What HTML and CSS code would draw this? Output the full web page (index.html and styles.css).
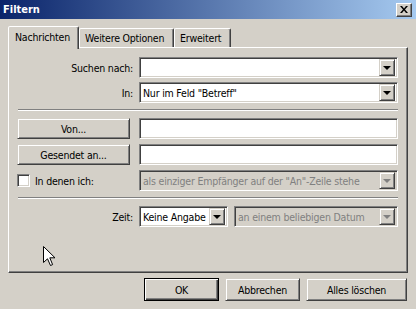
FILE: index.html
```html
<!DOCTYPE html>
<html lang="de">
<head>
  <meta charset="UTF-8" />
  <title>Filtern</title>
  <link rel="stylesheet" href="styles.css">
</head>
<body>
  <div class="window">
    <div class="titlebar">
      <span class="title">Filtern</span>
      <span class="close-btn">
        <svg width="8" height="7" viewBox="0 0 8 7"><path d="M0 0h2l2 2.5L6 0h2L5 3.5 8 7H6L4 4.5 2 7H0l3-3.5z" fill="#000"/></svg>
      </span>
    </div>

    <div class="client">
      <div class="tabs">
        <div class="tab active">Nachrichten</div>
        <div class="tab">Weitere Optionen</div>
        <div class="tab">Erweitert</div>
      </div>

      <div class="panel">
        <div class="row">
          <span class="lbl">Suchen nach:</span>
          <div class="combo"><span class="combo-text"></span><span class="drop"><i class="arrow"></i></span></div>
        </div>
        <div class="row gap4">
          <span class="lbl">In:</span>
          <div class="combo"><span class="combo-text">Nur im Feld "Betreff"</span><span class="drop"><i class="arrow"></i></span></div>
        </div>

        <div class="sep"></div>

        <div class="row">
          <span class="btn small">Von...</span>
          <div class="field"></div>
        </div>
        <div class="row gap5">
          <span class="btn small">Gesendet an...</span>
          <div class="field"></div>
        </div>
        <div class="row gap5">
          <span class="check-wrap"><span class="checkbox"></span>In denen ich:</span>
          <div class="combo disabled"><span class="combo-text">als einziger Empfänger auf der "An"-Zeile stehe</span><span class="drop"><i class="arrow"></i></span></div>
        </div>

        <div class="sep"></div>

        <div class="row zeit">
          <span class="lbl">Zeit:</span>
          <div class="pair">
            <div class="combo short"><span class="combo-text">Keine Angabe</span><span class="drop"><i class="arrow"></i></span></div>
            <div class="combo disabled"><span class="combo-text">an einem beliebigen Datum</span><span class="drop"><i class="arrow"></i></span></div>
          </div>
        </div>
      </div>

      <div class="actions">
        <span class="btn default">OK</span>
        <span class="btn">Abbrechen</span>
        <span class="btn wide">Alles löschen</span>
      </div>
    </div>

    <svg class="cursor" width="13" height="21" viewBox="0 0 13 21">
      <path d="M0.5 0.5 L0.5 16.5 L4.5 12.8 L7.5 19.5 L9.6 18.6 L6.8 11.8 L12 11.8 Z" fill="#fff" stroke="#000" stroke-width="1"/>
    </svg>
  </div>
</body>
</html>
```

FILE: styles.css
```css
:root {
  --face: #d4d0c8;
  --light: #ffffff;
  --shadow: #808080;
  --dark: #404040;
  --grey-text: #808080;
}

* {
  box-sizing: border-box;
  margin: 0;
  padding: 0;
}

body {
  width: 416px;
  height: 309px;
  overflow: hidden;
  font-family: "DejaVu Sans Condensed", "DejaVu Sans", sans-serif;
  font-size: 10.5px;
  letter-spacing: -0.2px;
  color: #000;
  background: var(--face);
}

.window {
  position: relative;
  width: 416px;
  height: 309px;
  background: var(--face);
}

/* title bar */
.titlebar {
  height: 19px;
  display: flex;
  align-items: center;
  justify-content: space-between;
  padding: 0 4px 0 3px;
  background: linear-gradient(to right, #0a246a 0%, #a6caf0 100%);
}

.title {
  color: #fff;
  font-weight: bold;
  font-size: 11px;
  letter-spacing: 0;
}

.close-btn {
  width: 16px;
  height: 14px;
  display: flex;
  align-items: center;
  justify-content: center;
  background: var(--face);
  border: 1px solid;
  border-color: var(--light) var(--dark) var(--dark) var(--light);
  box-shadow: inset -1px -1px var(--shadow);
}

/* client area */
.client {
  padding: 7px 9px 0 8px;
}

.tabs {
  display: flex;
  align-items: flex-end;
  height: 21px;
}

.tab {
  height: 19px;
  padding: 0 5px;
  display: flex;
  align-items: center;
  white-space: nowrap;
  border: 1px solid;
  border-bottom: none;
  border-color: var(--light) var(--dark) transparent var(--light);
  box-shadow: inset -1px 0 var(--shadow);
  border-radius: 2px 2px 0 0;
}

.tab:nth-child(2) { width: 95px; }
.tab:nth-child(3) { width: 57px; }

.tab.active {
  position: relative;
  z-index: 1;
  width: 71px;
  height: 23px;
  margin-bottom: -2px;
  padding: 0 0 3px 6px;
  background: var(--face);
}

.panel {
  width: 400px;
  height: 226px;
  padding: 9px 9px 0 8px;
  border: 1px solid;
  border-color: var(--light) var(--dark) var(--dark) var(--light);
  box-shadow: inset -1px -1px var(--shadow);
}

.row {
  display: grid;
  grid-template-columns: 122px 259px;
  align-items: center;
  height: 21px;
}

.row.gap4 { margin-top: 4px; }
.row.gap5 { margin-top: 5px; }
.row.zeit { margin-top: 3px; }

.lbl {
  text-align: right;
  padding-right: 6px;
}

.sep {
  height: 2px;
  margin: 6px 0 7px 1px;
  border-top: 1px solid var(--shadow);
  border-bottom: 1px solid var(--light);
}

/* sunken controls */
.field,
.combo,
.checkbox {
  background: #fff;
  border: 1px solid;
  border-color: var(--shadow) var(--light) var(--light) var(--shadow);
  box-shadow: inset 1px 1px var(--dark), inset -1px -1px var(--face);
}

.field {
  height: 21px;
}

.combo {
  height: 21px;
  display: flex;
  align-items: center;
  padding: 2px;
}

.combo-text {
  flex: 1;
  padding-left: 1px;
  white-space: nowrap;
  overflow: hidden;
}

.drop {
  flex: none;
  width: 16px;
  height: 17px;
  display: flex;
  align-items: center;
  justify-content: center;
  background: var(--face);
  border: 1px solid;
  border-color: var(--face) var(--dark) var(--dark) var(--face);
  box-shadow: inset 1px 1px var(--light), inset -1px -1px var(--shadow);
}

.arrow {
  width: 0;
  height: 0;
  border-left: 4px solid transparent;
  border-right: 4px solid transparent;
  border-top: 4px solid #000;
  margin-top: 1px;
}

.combo.disabled {
  background: var(--face);
  color: var(--grey-text);
}

.combo.disabled .arrow {
  border-top-color: var(--grey-text);
}

.pair {
  display: flex;
  gap: 6px;
}

.combo.short { width: 89px; }
.pair .combo.disabled { width: 164px; }

.check-wrap {
  display: flex;
  align-items: center;
  gap: 5px;
}

.checkbox {
  width: 13px;
  height: 13px;
}

/* raised buttons */
.btn {
  display: flex;
  align-items: center;
  justify-content: center;
  width: 75px;
  height: 23px;
  background: var(--face);
  border: 1px solid;
  border-color: var(--face) var(--dark) var(--dark) var(--face);
  box-shadow: inset 1px 1px var(--light), inset -1px -1px var(--shadow);
}

.btn.small {
  width: 113px;
  height: 21px;
}

.btn.wide { width: 101px; }

.btn.default {
  border-color: #000;
  box-shadow: inset 1px 1px var(--light), inset -1px -1px var(--dark), inset -2px -2px var(--shadow);
}

.actions {
  display: flex;
  justify-content: flex-end;
  gap: 6px;
  margin-top: 5px;
}

.cursor {
  position: absolute;
  left: 43px;
  top: 246px;
}
```
